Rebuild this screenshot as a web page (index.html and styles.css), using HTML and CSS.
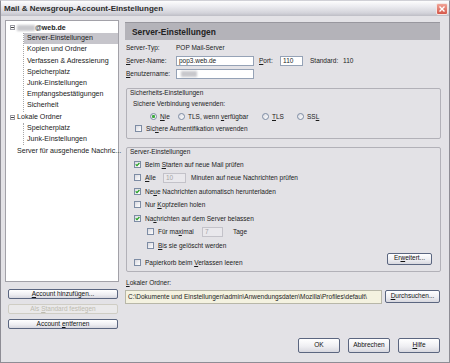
FILE: index.html
```html
<!DOCTYPE html>
<html lang="de">
<head>
    <meta charset="UTF-8">
    <meta name="viewport" content="width=device-width, initial-scale=1.0">
    <title>Mail &amp; Newsgroup-Account-Einstellungen</title>
    <link rel="stylesheet" href="styles.css">
</head>
<body>
<div class="window">
    <div class="titlebar">
        <span class="title">Mail &amp; Newsgroup-Account-Einstellungen</span>
        <span class="close">
            <svg width="8" height="8" viewBox="0 0 8 8"><path d="M1.5 1.5 L6.5 6.5 M6.5 1.5 L1.5 6.5" stroke="#fff" stroke-width="1.4" fill="none"/></svg>
        </span>
    </div>

    <div class="client">
        <!-- Kontenbaum -->
        <div class="sidebar">
            <div class="tree">
                <div class="node"><span class="twisty"></span><span class="blur"></span><b>@web.de</b></div>
                <div class="children">
                    <div class="item selected">Server-Einstellungen</div>
                    <div class="item">Kopien und Ordner</div>
                    <div class="item">Verfassen &amp; Adressierung</div>
                    <div class="item">Speicherplatz</div>
                    <div class="item">Junk-Einstellungen</div>
                    <div class="item">Empfangsbestätigungen</div>
                    <div class="item">Sicherheit</div>
                </div>
                <div class="node"><span class="twisty"></span><span>Lokale Ordner</span></div>
                <div class="children">
                    <div class="item">Speicherplatz</div>
                    <div class="item">Junk-Einstellungen</div>
                </div>
                <div class="node leaf"><span>Server für ausgehende Nachric...</span></div>
            </div>
            <div class="side-buttons">
                <button class="btn"><u>A</u>ccount hinzufügen...</button>
                <button class="btn" disabled>Als <u>S</u>tandard festlegen</button>
                <button class="btn">Account <u>e</u>ntfernen</button>
            </div>
        </div>

        <!-- Einstellungen -->
        <div class="main">
            <div class="pane-header">Server-Einstellungen</div>

            <div class="row first">
                <span class="label">Server-Typ:</span>
                <span>POP Mail-Server</span>
            </div>
            <div class="row">
                <span class="label"><u>S</u>erver-Name:</span>
                <span class="field name">pop3.web.de</span>
                <span class="port-label"><u>P</u>ort:</span>
                <span class="field port">110</span>
                <span class="std-label">Standard:</span>
                <span>110</span>
            </div>
            <div class="row">
                <span class="label"><u>B</u>enutzername:</span>
                <span class="field name"><span class="blur user"></span></span>
            </div>

            <div class="group">
                <div class="caption">Sicherheits-Einstellungen</div>
                <div class="sub-label">Sichere Verbindung verwenden:</div>
                <div class="radios">
                    <span class="option opt-nie"><span class="rb on"></span><span><u>N</u>ie</span></span>
                    <span class="option opt-tls1"><span class="rb"></span><span>TLS, wenn <u>v</u>erfügbar</span></span>
                    <span class="option opt-tls2"><span class="rb"></span><span><u>T</u>LS</span></span>
                    <span class="option"><span class="rb"></span><span>SS<u>L</u></span></span>
                </div>
                <div class="check sec-check"><span class="cb"></span><span>Sic<u>h</u>ere Authentifikation verwenden</span></div>
            </div>

            <div class="group">
                <div class="caption">Server-Einstellungen</div>
                <div class="checks">
                    <div class="check"><span class="cb"><svg width="5" height="5" viewBox="0 0 5 5"><path d="M0.7 2.3 L2 3.7 L4.4 1" stroke="#21a020" stroke-width="1.2" fill="none"/></svg></span><span>Beim <u>S</u>tarten auf neue Mail prüfen</span></div>
                    <div class="check"><span class="cb"></span><span class="alle"><u>A</u>lle</span><span class="field small off">10</span><span class="after">Minuten auf neue Nachrichten prüfen</span></div>
                    <div class="check"><span class="cb"><svg width="5" height="5" viewBox="0 0 5 5"><path d="M0.7 2.3 L2 3.7 L4.4 1" stroke="#21a020" stroke-width="1.2" fill="none"/></svg></span><span>Ne<u>u</u>e Nachrichten automatisch herunterladen</span></div>
                    <div class="check"><span class="cb"></span><span>Nur <u>K</u>opfzeilen holen</span></div>
                    <div class="check"><span class="cb"><svg width="5" height="5" viewBox="0 0 5 5"><path d="M0.7 2.3 L2 3.7 L4.4 1" stroke="#21a020" stroke-width="1.2" fill="none"/></svg></span><span>Na<u>c</u>hrichten auf dem Server belassen</span></div>
                    <div class="check sub"><span class="cb"></span><span class="max">Für ma<u>x</u>imal</span><span class="field tiny off">7</span><span class="tage">Tage</span></div>
                    <div class="check sub"><span class="cb"></span><span><u>B</u>is sie gelöscht werden</span></div>
                    <div class="last-row">
                        <div class="check"><span class="cb"></span><span>Papierkorb beim <u>V</u>erlassen leeren</span></div>
                        <button class="btn extra">Er<u>w</u>eitert...</button>
                    </div>
                </div>
            </div>

            <div class="lokal"><u>L</u>okaler Ordner:</div>
            <div class="path-row">
                <span class="path">C:\Dokumente und Einstellungen\admin\Anwendungsdaten\Mozilla\Profiles\default\</span>
                <button class="btn browse"><u>D</u>urchsuchen...</button>
            </div>

            <div class="dialog-buttons">
                <button class="btn">OK</button>
                <button class="btn">Abbrechen</button>
                <button class="btn"><u>H</u>ilfe</button>
            </div>
        </div>
    </div>
</div>
</body>
</html>
```

FILE: styles.css
```css
body {
    margin: 0;
    font-family: "Liberation Sans", Arial, sans-serif;
    font-size: 6.5px;
    color: #1b1b1b;
    background-color: #e3e2e6;
}
.window {
    width: 450px;
    height: 363px;
    box-sizing: border-box;
    border: 1px solid #8e8d95;
    border-top-color: #d0d0d6;
    background-color: #e3e2e6;
    display: flex;
    flex-direction: column;
}
.titlebar {
    height: 15px;
    display: flex;
    align-items: center;
    justify-content: space-between;
    padding: 0 1px 0 3px;
    background: linear-gradient(#fdfdfd, #ececf0 35%, #d3d3da 80%, #bdbdc5);
}
.title {
    font-weight: bold;
    font-size: 8px;
    color: #2c2c2c;
}
.close {
    width: 12px;
    height: 12px;
    box-sizing: border-box;
    border: 1px solid #f4e6e4;
    border-radius: 2px;
    background: linear-gradient(#f0a396, #d5574a);
    display: flex;
    align-items: center;
    justify-content: center;
}
.client {
    flex: 1;
    display: flex;
    gap: 5px;
    padding: 4px 7px 0 4px;
}

/* Baum links */
.sidebar {
    width: 114px;
    display: flex;
    flex-direction: column;
}
.tree {
    height: 262px;
    box-sizing: border-box;
    background-color: #fff;
    border: 1px solid #a2a1a8;
    padding-top: 1px;
    font-size: 7.1px;
}
.node {
    height: 11.2px;
    display: flex;
    align-items: center;
    padding-left: 4px;
    white-space: nowrap;
}
.node.leaf {
    padding-left: 11px;
}
.node b {
    font-size: 7px;
}
.twisty {
    width: 5px;
    height: 5px;
    box-sizing: border-box;
    border: 1px solid #9d9da5;
    margin-right: 2px;
    background: linear-gradient(#444, #444) center / 3px 1px no-repeat, #fff;
}
.blur {
    display: inline-block;
    width: 18px;
    height: 6px;
    background-color: #c8c8cc;
    filter: blur(1px);
}
.children {
    margin-left: 17px;
    border-left: 1px dotted #a8a8a8;
}
.item {
    height: 11.2px;
    line-height: 11.2px;
    padding-left: 3px;
    white-space: nowrap;
}
.item.selected {
    background-color: #c6c5cb;
}
.side-buttons {
    display: flex;
    flex-direction: column;
    gap: 5px;
    margin: 7px 1px 0 3px;
}
.side-buttons .btn {
    height: 10px;
}

/* Knöpfe */
.btn {
    font-family: "Liberation Sans", Arial, sans-serif;
    font-size: 6.5px;
    color: #111;
    padding: 0;
    border: 1px solid #5b6680;
    border-radius: 2px;
    background: linear-gradient(#ffffff, #efeff3 55%, #d8d8df);
    box-sizing: border-box;
    line-height: 1;
}
.btn:disabled {
    color: #bdbbb0;
    border-color: #cfcdc4;
    background: #eae9ea;
}

/* Rechte Seite */
.main {
    width: 318px;
    display: flex;
    flex-direction: column;
}
.pane-header {
    height: 18px;
    box-sizing: border-box;
    margin: 2px 2px 0 1px;
    padding-left: 7px;
    display: flex;
    align-items: center;
    background-color: #b4b3b9;
    border-top: 1px solid #98979e;
    font-weight: bold;
    font-size: 8.4px;
    color: #222;
}
.row {
    height: 13px;
    display: flex;
    align-items: center;
    padding-left: 2px;
    white-space: nowrap;
}
.row.first {
    margin-top: 1px;
}
.label {
    width: 50px;
}
.field {
    height: 10px;
    box-sizing: border-box;
    border: 1px solid #95a2b6;
    background-color: #fff;
    padding-left: 2px;
    display: flex;
    align-items: center;
    overflow: hidden;
}
.field.name {
    width: 78px;
}
.field.port {
    width: 23px;
}
.blur.user {
    width: 16px;
    margin-left: 2px;
}
.port-label {
    margin-left: 5px;
    width: 21px;
}
.std-label {
    margin-left: 7px;
    width: 33px;
}

.group {
    margin: 8px 1px 0 2px;
    border: 1px solid #b2b1b8;
    border-radius: 2px;
}
.caption {
    height: 7px;
    line-height: 7px;
    padding-left: 3px;
}
.sub-label {
    height: 12px;
    line-height: 12px;
    margin-top: 2px;
    padding-left: 6px;
}
.radios {
    height: 12px;
    display: flex;
    align-items: center;
    padding-left: 23px;
    white-space: nowrap;
}
.option {
    display: flex;
    align-items: center;
}
.opt-nie {
    width: 28px;
}
.opt-tls1 {
    width: 84px;
}
.opt-tls2 {
    width: 35px;
}
.rb {
    width: 7px;
    height: 7px;
    box-sizing: border-box;
    border: 1px solid #7d8ca4;
    border-radius: 50%;
    margin-right: 3px;
    background: linear-gradient(135deg, #d9d9e0, #fff);
}
.rb.on {
    background: radial-gradient(circle, #3daa3d 0 1.3px, transparent 1.8px), linear-gradient(135deg, #d9d9e0, #fff);
}
.check {
    height: 13.5px;
    display: flex;
    align-items: center;
    padding-left: 7px;
    white-space: nowrap;
}
.check.sub {
    padding-left: 20px;
}
.sec-check {
    padding-left: 8px;
    margin-bottom: 2px;
}
.cb {
    width: 7px;
    height: 7px;
    box-sizing: border-box;
    border: 1px solid #7d8ca4;
    margin-right: 4px;
    background: linear-gradient(135deg, #d9d9e0, #fff);
    display: flex;
    align-items: center;
    justify-content: center;
}
.checks {
    margin-top: 3px;
    padding-bottom: 1px;
}
.alle {
    width: 18px;
}
.max {
    width: 44px;
}
.field.small {
    width: 23px;
}
.field.tiny {
    width: 21px;
}
.field.off {
    background-color: #e9e8ec;
    border-color: #c3c2c9;
    color: #a5a5a5;
}
.after {
    margin-left: 5px;
}
.tage {
    margin-left: 10px;
}
.last-row {
    display: flex;
    justify-content: space-between;
    align-items: flex-start;
    margin-top: 0.5px;
}
.last-row .check {
    margin-top: 3.5px;
}
.extra {
    width: 45px;
    height: 12px;
    margin-right: 8px;
}
.lokal {
    margin-top: 6px;
    height: 10px;
    line-height: 10px;
    padding-left: 2px;
}
.path-row {
    display: flex;
    align-items: center;
    gap: 3px;
    margin: 2px 2px 0 1px;
}
.path {
    width: 257px;
    height: 14px;
    box-sizing: border-box;
    border: 1px solid #b8b7a8;
    background-color: #f4f2e0;
    padding-left: 2px;
    display: flex;
    align-items: center;
    white-space: nowrap;
    overflow: hidden;
}
.browse {
    width: 55px;
    height: 13px;
}
.dialog-buttons {
    margin-top: auto;
    margin-bottom: 9px;
    padding-right: 2px;
    display: flex;
    justify-content: flex-end;
    gap: 8px;
}
.dialog-buttons .btn {
    width: 42px;
    height: 15px;
}
```
